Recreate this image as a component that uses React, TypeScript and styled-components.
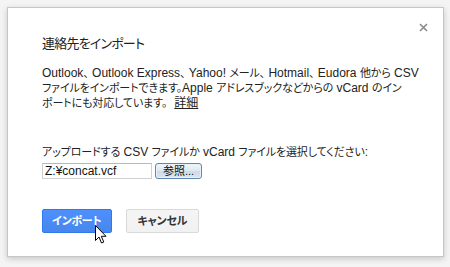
import React from "react";
import styled, { createGlobalStyle } from "styled-components";

const Global = createGlobalStyle`
  html, body { margin: 0; padding: 0; background: #f4f4f4; }
  body {
    font-family: "Liberation Sans", Arial, "Noto Sans CJK JP", sans-serif;
    font-feature-settings: "palt";
    color: #222;
  }
`;

const Page = styled.div`
  width: 450px;
  height: 267px;
  padding: 7px 0 0 7px;
  box-sizing: border-box;
`;

const Dialog = styled.div`
  position: relative;
  width: 437px;
  height: 250px;
  box-sizing: border-box;
  background: #fff;
  border: 1px solid #c6c6c6;
  box-shadow: 0 2px 6px rgba(0, 0, 0, 0.18);
  padding: 26px 34px 0 34px;
  display: flex;
  flex-direction: column;
`;

const Close = styled.button`
  position: absolute;
  top: 13px;
  right: 14px;
  width: 12px;
  height: 12px;
  padding: 0;
  border: 0;
  background: transparent;
  display: flex;
  align-items: center;
  justify-content: center;
`;

const Title = styled.div`
  font-size: 13px;
  letter-spacing: -0.8px;
  line-height: 20px;
  color: #222;
`;

const Ja = styled.span`
  font-size: 11px;
  letter-spacing: -0.12px;
`;

const Body = styled.div`
  margin-top: 12px;
  font-size: 12px;
  line-height: 15px;
  white-space: nowrap;
`;

const Link = styled.a`
  color: #222;
  text-decoration: underline;
  margin-left: 7px;
`;

const Label = styled.div`
  margin-top: 34px;
  font-size: 12px;
  line-height: 15px;
  white-space: nowrap;
`;

const FileRow = styled.div`
  margin-top: 3px;
  display: flex;
  align-items: center;
  gap: 3px;
`;

const FileField = styled.div`
  width: 110px;
  height: 16px;
  box-sizing: border-box;
  border: 1px solid #d0d0d0;
  border-top-color: #b8b8b8;
  font-size: 12px;
  line-height: 14px;
  padding-left: 2px;
  color: #111;
`;

const BrowseButton = styled.div`
  width: 47px;
  height: 16px;
  box-sizing: border-box;
  border: 1px solid #5d88b0;
  border-radius: 3px;
  background: linear-gradient(#f2f6fa, #dde7f0 50%, #cfdbe7 51%, #d9e4ee);
  box-shadow: inset 0 0 0 1px #e8f2fb;
  font-size: 11px;
  line-height: 14px;
  text-align: center;
  color: #111;
`;

const Actions = styled.div`
  margin-top: 30px;
  display: flex;
  gap: 14px;
  position: relative;
`;

const Button = styled.div<{ $primary?: boolean }>`
  height: 24px;
  box-sizing: border-box;
  padding: 0 ${(p) => (p.$primary ? "9px" : "11px")};
  border-radius: 2px;
  font-size: 11px;
  letter-spacing: -0.2px;
  font-weight: bold;
  line-height: 22px;
  border: 1px solid ${(p) => (p.$primary ? "#3079ed" : "#d9d9d9")};
  color: ${(p) => (p.$primary ? "#fff" : "#333")};
  background: ${(p) =>
    p.$primary
      ? "linear-gradient(#4d90fe, #4787ed)"
      : "linear-gradient(#f5f5f5, #f1f1f1)"};
`;

const Cursor = styled.svg`
  position: absolute;
  left: 53px;
  top: 16px;
`;

export default function App() {
  return (
    <>
      <Global />
      <Page>
        <Dialog>
          <Close aria-label="閉じる">
            <svg width="9" height="9" viewBox="0 0 9 9">
              <path d="M1 1L8 8M8 1L1 8" stroke="#8a8a8a" strokeWidth="1.6" />
            </svg>
          </Close>
          <Title>連絡先をインポート</Title>
          <Body>
            Outlook<Ja>、</Ja> Outlook Express<Ja>、</Ja> Yahoo! <Ja>メール、</Ja> Hotmail
            <Ja>、</Ja> Eudora <Ja>他から</Ja> CSV
            <br />
            <Ja>ファイルをインポートできます。</Ja>Apple <Ja>アドレスブックなどからの</Ja> vCard{" "}
            <Ja>のイン</Ja>
            <br />
            <Ja>ポートにも対応しています。</Ja>
            <Link>詳細</Link>
          </Body>
          <Label>
            <Ja>アップロードする</Ja> CSV <Ja>ファイルか</Ja> vCard{" "}
            <Ja>ファイルを選択してください</Ja>:
          </Label>
          <FileRow>
            <FileField>Z:¥concat.vcf</FileField>
            <BrowseButton>参照...</BrowseButton>
          </FileRow>
          <Actions>
            <Button $primary>インポート</Button>
            <Button>キャンセル</Button>
            <Cursor width="12" height="19" viewBox="0 0 12 19">
              <path
                d="M0.5 0.5 L0.5 15.5 L4 12 L6.5 18 L8.8 17 L6.3 11.3 L11 11.3 Z"
                fill="#fff"
                stroke="#000"
                strokeWidth="1"
                strokeLinejoin="round"
              />
            </Cursor>
          </Actions>
        </Dialog>
      </Page>
    </>
  );
}
